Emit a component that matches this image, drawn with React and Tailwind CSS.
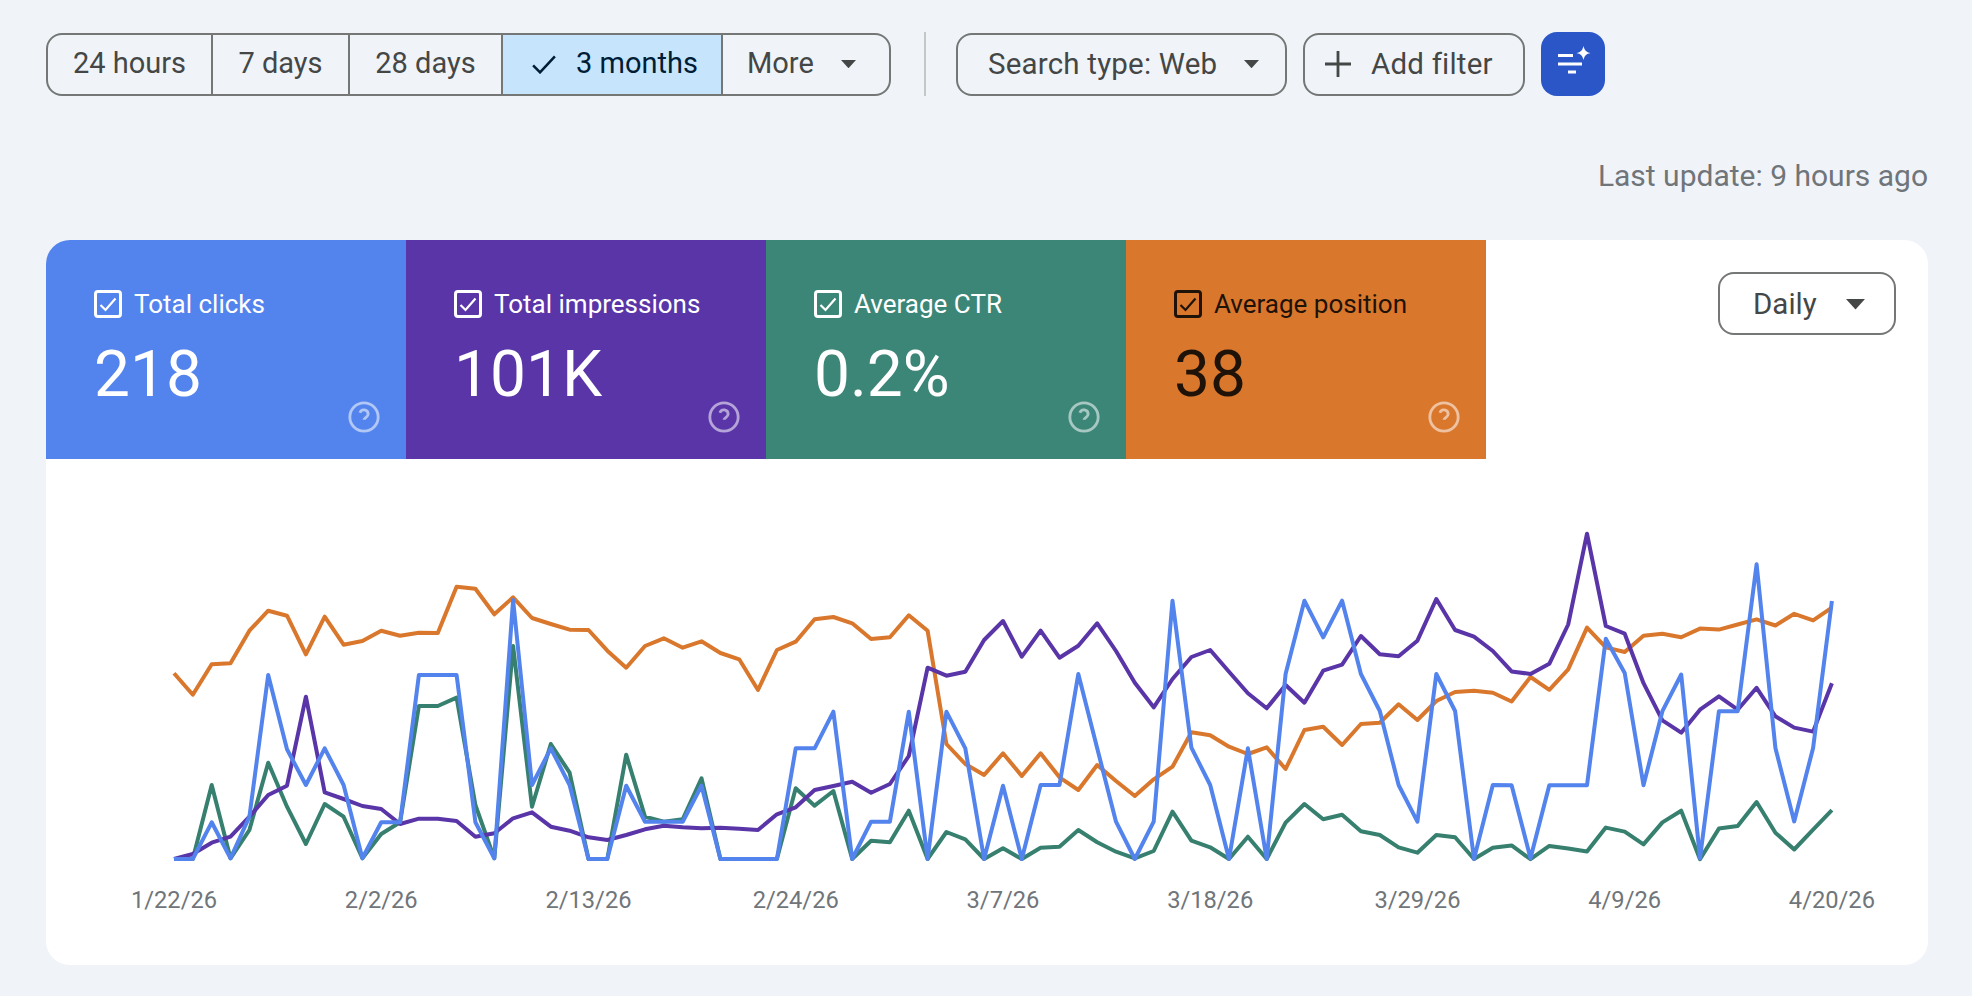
import React from "react";

const START_X = 174;
const STEP = 18.84;

// Chart values measured on the reference, per stretch of days: [originY, yScale, values]
const conv = (parts) =>
  parts.flatMap(([oy, s, vals]) => vals.map((v) => oy + v / s));

const orange = conv([
  [560, 3, [340,404,313,310,212,152,167,283,170,254,243,212,227,218,219,80,86,163,112,174,192,209,210,272,323,258,235,263,244,279,298,390,270,245,178,171,190,237,232,166,212,552,612,645,580,648]],
  [520, 3, [700,772,810,735,783,828,778,740,637,646,680,702,682,747,630,620,675,612,608,553,600,543,516,512,518]],
  [150, 1.96, [1081,1033,1058,1018,936,975,984,952,948,955,938,940,930,920,932,909,922,897]],
]);
const blue = conv([
  [560, 3, [897,897,787,895,770,345,568,675,565,675,895,787,787,345,345,345,787,895,120,675,565,675,897,897,677,785,785,785,677,897,897,897,897,565,565,455,897,785,785,455,897,455,565,897,677,897]],
  [520, 3, [795,795,462,685,905,1017,905,242,683,795,1017,685,1017,462,242,352,242,462,573,795,905,462,573,1017,795]],
  [150, 1.96, [1245,1388,1245,1245,1245,958,1025,1245,1100,1028,1388,1100,1100,812,1172,1316,1172,884]],
]);
const green = conv([
  [560, 3, [897,897,675,895,810,608,740,852,732,770,895,822,787,438,438,413,735,895,258,740,552,638,897,897,584,770,785,778,655,897,897,897,897,685,737,693,897,842,847,752,897,816,838,897,865,897]],
  [520, 3, [983,980,930,967,995,1015,993,875,962,982,1017,950,1017,908,852,898,884,934,945,982,998,945,952,1017,983]],
  [150, 1.96, [1363,1390,1364,1369,1375,1328,1336,1361,1318,1295,1390,1330,1325,1278,1338,1371,1332,1294]],
]);
const purple = conv([
  [560, 3, [897,882,848,830,770,705,677,410,697,717,738,747,792,776,776,783,830,820,775,757,800,812,832,840,825,808,797,802,805,803,806,810,763,742,690,678,665,698,672,588,323,347,335,240,183,290]],
  [520, 3, [332,413,377,310,393,488,562,477,411,390,455,520,565,495,548,452,434,348,403,409,362,237,330,350,393]],
  [150, 1.96, [1022,1027,1007,930,752,933,948,1045,1118,1142,1097,1071,1097,1054,1110,1132,1140,1045]],
]);

// The chart svg begins at the card's left edge and the tile row's bottom edge.
const toPoints = (ys) =>
  ys.map((y, i) => `${(START_X + STEP * i - 46).toFixed(1)},${(y - 459).toFixed(1)}`).join(" ");

const series = [
  { ys: orange, color: "#d9782d" },
  { ys: green, color: "#37806f" },
  { ys: purple, color: "#5935a8" },
  { ys: blue, color: "#5383ec" },
];

const labels = ["1/22/26","2/2/26","2/13/26","2/24/26","3/7/26","3/18/26","3/29/26","4/9/26","4/20/26"];

const Caret = ({ w = 15 }) => (
  <svg width={w} height={w * 0.55} viewBox="0 0 20 11" className="shrink-0">
    <path d="M0 0h20L10 11z" fill="#444746" />
  </svg>
);

const Tick = ({ stroke, w = 26 }) => (
  <svg width={w} height={w * 0.8} viewBox="0 0 26 21" fill="none" className="shrink-0">
    <path d="M2 11.5 9 18.5 24 2.5" stroke={stroke} strokeWidth="2.6" />
  </svg>
);

const Tile = ({ label, value, bg, dark }) => {
  const fg = dark ? "#1f1208" : "#ffffff";
  return (
    <div className={`relative h-[219px] w-[360px] shrink-0 pl-[48px] pt-[50px] ${bg}`}>
      <div className="flex h-[28px] items-center gap-[12px]">
        <span
          className={`flex h-[28px] w-[28px] items-center justify-center rounded-[4px] border-[3px] ${dark ? "border-[#1f1208]" : "border-white"}`}
        >
          <svg width="18" height="15" viewBox="0 0 18 15" fill="none">
            <path d="M1.5 8 6.5 13 16.5 1.5" stroke={fg} strokeWidth="2.2" />
          </svg>
        </span>
        <span className={`text-[26px] leading-[30px] ${dark ? "text-[#1f1208]" : "text-white"}`}>{label}</span>
      </div>
      <div className={`mt-[19px] text-[64px] leading-[76px] ${dark ? "text-[#1f1208]" : "text-white"}`}>{value}</div>
      <svg
        width="34"
        height="34"
        viewBox="0 0 24 24"
        fill="none"
        stroke="#ffffff"
        strokeOpacity="0.55"
        strokeWidth="2"
        className="absolute bottom-[25px] right-[25px]"
      >
        <circle cx="12" cy="12" r="10" />
        <path d="M9.09 9a3 3 0 0 1 5.83 1c0 2-2.92 2.6-2.92 4" />
        <path d="M12 17.5h.01" strokeWidth="2.4" />
      </svg>
    </div>
  );
};

const Segment = ({ w, children, className = "" }) => (
  <div className={`flex h-full items-center border-l-2 border-[#747775] first:border-l-0 ${w} ${className}`}>
    {children}
  </div>
);

export default function App() {
  return (
    <div
      className="min-h-[996px] bg-[#f0f4f9] pb-[31px] pl-[46px] pr-[44px] pt-[32px] text-[#444746]"
      style={{ fontFamily: 'Roboto, "Liberation Sans", sans-serif' }}
    >
      {/* Toolbar */}
      <div className="flex h-[64px] items-center text-[29.5px] tracking-[0.2px]">
        <div className="flex h-[63px] w-[845px] overflow-hidden rounded-[16px] border-2 border-[#747775] text-[29px] tracking-normal">
          <Segment w="w-[163px]" className="justify-center">24 hours</Segment>
          <Segment w="w-[137px]" className="justify-center">7 days</Segment>
          <Segment w="w-[153px]" className="justify-center">28 days</Segment>
          <Segment w="w-[220px]" className="gap-[19px] bg-[#c6e5fd] pl-[28px] text-[#001d35]">
            <Tick stroke="#001d35" />
            3 months
          </Segment>
          <Segment w="w-[168px]" className="gap-[27px] pl-[24px]">
            More
            <Caret />
          </Segment>
        </div>
        <div className="ml-[33px] h-[64px] w-[2px] bg-[#c4c7c5]" />
        <div className="ml-[30px] flex h-[63px] w-[331px] items-center gap-[27px] rounded-[16px] border-2 border-[#747775] pl-[30px]">
          Search type: Web
          <Caret />
        </div>
        <div className="ml-[16px] flex h-[63px] w-[222px] items-center gap-[19px] rounded-[16px] border-2 border-[#747775] pl-[19px]">
          <svg width="28" height="28" viewBox="0 0 28 28" fill="none" className="shrink-0">
            <path d="M14 1v26M1 14h26" stroke="#444746" strokeWidth="2.8" />
          </svg>
          Add filter
        </div>
        <button className="ml-[16px] h-[64px] w-[64px] rounded-[16px] bg-[#2a56c8]">
          <svg width="64" height="64" viewBox="0 0 64 64" fill="none">
            <path d="M17 23.500h15M17 32h24M27 40h8" stroke="#ffffff" strokeWidth="3" />
            <path d="M42.500 14c1 4.400 2.700 6.200 7 7-4.300.9-6 2.600-7 7-1-4.400-2.700-6.100-7-7 4.300-.8 6-2.600 7-7z" fill="#ffffff" />
          </svg>
        </button>
      </div>

      {/* Last update */}
      <div className="mt-[63px] text-right text-[30px] leading-[34px] text-[#70757a]">Last update: 9 hours ago</div>

      {/* Card */}
      <div className="mt-[47px] h-[725px] overflow-hidden rounded-[24px] bg-white">
        <div className="flex">
          <Tile label="Total clicks" value="218" bg="bg-[#5383ec]" />
          <Tile label="Total impressions" value="101K" bg="bg-[#5935a8]" />
          <Tile label="Average CTR" value="0.2%" bg="bg-[#3c8678]" />
          <Tile label="Average position" value="38" bg="bg-[#d9772d]" dark />
          <div className="ml-auto mr-[32px] mt-[32px] flex h-[63px] w-[178px] items-center gap-[29px] rounded-[16px] border-2 border-[#747775] pl-[33px] pt-[2px] text-[29.5px]">
            Daily
            <Caret w={19} />
          </div>
        </div>
        <svg width="1882" height="506" viewBox="0 0 1882 506" fill="none" className="block">
          {series.map((s) => (
            <polyline key={s.color} points={toPoints(s.ys)} stroke={s.color} strokeWidth="4" strokeLinejoin="round" />
          ))}
          {labels.map((t, i) => (
            <text
              key={t}
              x={START_X + STEP * 11 * i - 46}
              y="449"
              textAnchor="middle"
              fontSize="23.700"
              fill="#70757a"
              fontFamily="Roboto, sans-serif"
            >
              {t}
            </text>
          ))}
        </svg>
      </div>
    </div>
  );
}
